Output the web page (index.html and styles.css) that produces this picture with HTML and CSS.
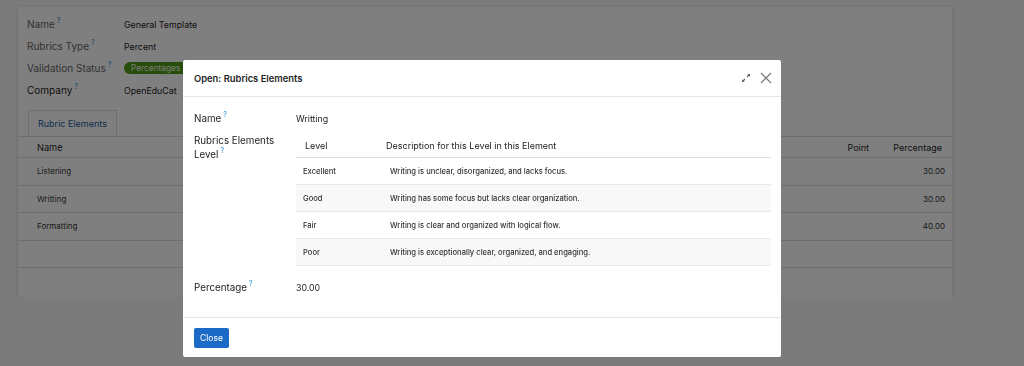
FILE: index.html
```html
<!DOCTYPE html>
<html>
<head>
    <title>Rubric Template</title>
    <link rel="stylesheet" href="styles.css">
</head>
<body>
<div class="sheet">
    <div class="field-row"><span class="label">Name<sup>?</sup></span><span class="value">General Template</span></div>
    <div class="field-row"><span class="label">Rubrics Type<sup>?</sup></span><span class="value">Percent</span></div>
    <div class="field-row"><span class="label">Validation Status<sup>?</sup></span><span class="value"><span class="badge">Percentages Distributed</span></span></div>
    <div class="field-row"><span class="label dark">Company<sup>?</sup></span><span class="value">OpenEduCat</span></div>

    <div class="tabs"><span class="tab">Rubric Elements</span></div>
    <table class="list">
        <tr class="list-head"><th>Name</th><th class="num pt">Point</th><th class="num">Percentage</th></tr>
        <tr><td>Listening</td><td></td><td class="num">30.00</td></tr>
        <tr><td>Writting</td><td></td><td class="num">30.00</td></tr>
        <tr><td>Formatting</td><td></td><td class="num">40.00</td></tr>
        <tr class="empty"><td></td><td></td><td></td></tr>
    </table>
</div>

<div class="backdrop"></div>

<div class="modal">
    <div class="modal-header">
        <span class="modal-title">Open: Rubrics Elements</span>
        <span class="modal-tools">
            <svg width="10" height="10" viewBox="0 0 10 10"><path d="M1.5 8.5 L4 6 M6 4 L8.5 1.5" stroke="#666" stroke-width="1.2"/><path d="M1 9 L1 6.3 L3.7 9 Z M9 1 L9 3.7 L6.3 1 Z" fill="#666"/></svg>
            <svg width="12" height="12" viewBox="0 0 12 12"><path d="M1 1 L11 11 M11 1 L1 11" stroke="#777" stroke-width="1.1"/></svg>
        </span>
    </div>
    <div class="modal-body">
        <div class="m-row">
            <span class="m-label">Name<sup>?</sup></span>
            <span class="m-value">Writting</span>
        </div>
        <div class="m-row">
            <span class="m-label">Rubrics Elements Level<sup>?</sup></span>
            <table class="levels">
                <tr><th class="lv">Level</th><th class="desc">Description for this Level in this Element</th></tr>
                <tr><td class="lv">Excellent</td><td>Writing is unclear, disorganized, and lacks focus.</td></tr>
                <tr><td class="lv">Good</td><td>Writing has some focus but lacks clear organization.</td></tr>
                <tr><td class="lv">Fair</td><td>Writing is clear and organized with logical flow.</td></tr>
                <tr><td class="lv">Poor</td><td>Writing is exceptionally clear, organized, and engaging.</td></tr>
            </table>
        </div>
        <div class="m-row pct">
            <span class="m-label">Percentage<sup>?</sup></span>
            <span class="m-value">30.00</span>
        </div>
    </div>
    <div class="modal-footer">
        <button class="btn-close">Close</button>
    </div>
</div>
</body>
</html>
```

FILE: styles.css
```css
body {
    margin: 0;
    background-color: #f6f6f6;
    font-family: Inter, "Noto Sans", sans-serif;
    font-size: 10px;
    color: #333;
}

sup {
    color: #1f8fd0;
    font-size: 7px;
    margin-left: 2px;
    vertical-align: 5px;
    line-height: 0;
}

.sheet {
    margin: 7px 0 0 18px;
    width: 934px;
    height: 290px;
    background-color: white;
    box-shadow: 0 1px 4px rgba(0, 0, 0, 0.15);
    box-sizing: border-box;
    padding-top: 6px;
}

.field-row {
    display: flex;
    align-items: center;
    height: 22px;
    padding-left: 9px;
}

.label {
    width: 97px;
    color: #666;
    font-size: 10px;
}

.label.dark {
    color: #222;
}

.value {
    color: #222;
    font-size: 8.8px;
}

.badge {
    display: inline-block;
    background-color: #4f9a14;
    color: #f0f8e6;
    border-radius: 8px;
    padding: 1px 7px;
    font-size: 8.3px;
}

.tabs {
    margin-top: 9px;
    padding-left: 10px;
    border-bottom: 1px solid #ddd;
    height: 26px;
    display: flex;
}

.tab {
    border: 1px solid #ddd;
    border-bottom: 1px solid white;
    padding: 0 9px;
    line-height: 25px;
    color: #1c5b9c;
    font-size: 9px;
    background: white;
}

.list {
    width: 100%;
    border-collapse: collapse;
}

.list th {
    text-align: left;
    font-weight: normal;
    font-size: 9.2px;
    color: #222;
    height: 20px;
    padding: 0 19px;
    border-bottom: 1px solid #ddd;
}

.list td {
    height: 26.5px;
    padding: 0 19px;
    font-size: 8px;
    color: #333;
    border-bottom: 1px solid #ddd;
}

.list .num {
    text-align: right;
    padding-right: 7px;
    padding-left: 0;
    width: 60px;
}

.list th.num {
    font-size: 9px;
    padding-right: 10px;
}

.list th.pt {
    width: 40px;
    padding-right: 13px;
}

.backdrop {
    position: fixed;
    inset: 0;
    background-color: rgba(0, 0, 0, 0.5);
}

.modal {
    position: absolute;
    left: 183px;
    top: 60px;
    width: 598px;
    height: 297px;
    background-color: white;
    border-radius: 2px;
    display: flex;
    flex-direction: column;
}

.modal-header {
    height: 36px;
    border-bottom: 1px solid #e6e6e6;
    display: flex;
    align-items: center;
    justify-content: space-between;
    padding: 0 9px 0 11px;
}

.modal-title {
    font-size: 9.4px;
    font-weight: 600;
    color: #222;
}

.modal-tools {
    display: flex;
    align-items: center;
    gap: 9px;
}

.modal-body {
    flex: 1;
    padding: 15px 10px 0 11px;
}

.m-row {
    display: flex;
}

.m-label {
    width: 102px;
    font-size: 9.8px;
    color: #222;
    line-height: 14px;
}

.m-value {
    font-size: 8.8px;
    color: #222;
    line-height: 14px;
}

.m-row + .m-row {
    margin-top: 8px;
}

.levels {
    flex: 1;
    border-collapse: collapse;
    margin-top: -1px;
}

.levels th {
    text-align: left;
    font-weight: normal;
    font-size: 9px;
    color: #222;
    height: 24px;
    border-bottom: 1px solid #ddd;
    padding: 0;
}

.levels td {
    height: 26px;
    font-size: 7.6px;
    font-weight: 500;
    color: #333;
    border-bottom: 1px solid #e8e8e8;
    padding: 0 0 0 4px;
}

.levels td.lv {
    width: 83px;
    padding-left: 7px;
}

.levels th.lv {
    padding-left: 9px;
    width: 81px;
}

.levels tr:nth-child(odd) td {
    background-color: #f8f8f8;
}

.m-row.pct {
    margin-top: 15px;
}

.modal-footer {
    height: 39px;
    border-top: 1px solid #e6e6e6;
    display: flex;
    align-items: center;
    padding-left: 11px;
}

.btn-close {
    background-color: #1b6ac6;
    color: white;
    border: none;
    border-radius: 2px;
    font-family: Inter, sans-serif;
    font-size: 8.6px;
    height: 20px;
    width: 35px;
    padding: 0;
}
```
